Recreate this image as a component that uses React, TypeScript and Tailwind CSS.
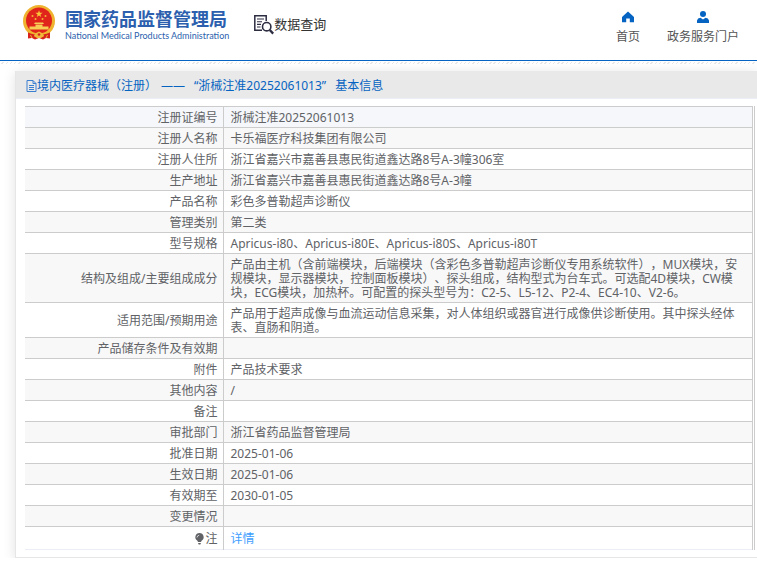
import React from "react";

type Row = {
    label: string;
    value: string;
};

const rows: Row[] = [
    {label: "注册证编号", value: "浙械注准20252061013"},
    {label: "注册人名称", value: "卡乐福医疗科技集团有限公司"},
    {label: "注册人住所", value: "浙江省嘉兴市嘉善县惠民街道鑫达路8号A-3幢306室"},
    {label: "生产地址", value: "浙江省嘉兴市嘉善县惠民街道鑫达路8号A-3幢"},
    {label: "产品名称", value: "彩色多普勒超声诊断仪"},
    {label: "管理类别", value: "第二类"},
    {label: "型号规格", value: "Apricus-i80、Apricus-i80E、Apricus-i80S、Apricus-i80T"},
    {
        label: "结构及组成/主要组成成分",
        value: "产品由主机（含前端模块，后端模块（含彩色多普勒超声诊断仪专用系统软件），MUX模块，安规模块，显示器模块，控制面板模块）、探头组成，结构型式为台车式。可选配4D模块，CW模块，ECG模块，加热杯。可配置的探头型号为：C2-5、L5-12、P2-4、EC4-10、V2-6。",
    },
    {
        label: "适用范围/预期用途",
        value: "产品用于超声成像与血流运动信息采集，对人体组织或器官进行成像供诊断使用。其中探头经体表、直肠和阴道。",
    },
    {label: "产品储存条件及有效期", value: ""},
    {label: "附件", value: "产品技术要求"},
    {label: "其他内容", value: "/"},
    {label: "备注", value: ""},
    {label: "审批部门", value: "浙江省药品监督管理局"},
    {label: "批准日期", value: "2025-01-06"},
    {label: "生效日期", value: "2025-01-06"},
    {label: "有效期至", value: "2030-01-05"},
    {label: "变更情况", value: ""},
];

const Emblem: React.FC = () => (
    <svg className="w-8 h-9" viewBox="0 0 32 36" fill="none" aria-hidden="true">
        <path d="M5 25L5 33.5L9 33L12 34.5L16 33L20 34.5L23 33L27 33.5L27 25Z" fill="#d8231c"/>
        <circle cx="16" cy="16" r="16" fill="#efb32f"/>
        <circle cx="16" cy="15.5" r="13" fill="#e0231b"/>
        <path d="M16 5.2L16.9 7.8H19.6L17.4 9.4L18.2 12L16 10.4L13.8 12L14.6 9.4L12.4 7.8H15.1Z" fill="#f8c63a"/>
        <circle cx="9.5" cy="11" r="1" fill="#f3b436"/>
        <circle cx="22.5" cy="11" r="1" fill="#f3b436"/>
        <circle cx="12.5" cy="14" r="1" fill="#f3b436"/>
        <circle cx="19.5" cy="14" r="1" fill="#f3b436"/>
        <path d="M12 17.5H20L21 19H11ZM12.5 19.5H19.5V21.5H12.5ZM6.5 21.5H25.5V24.5H6.5Z" fill="#f6cd55"/>
        <path d="M5 27.5Q10 30 12 29L11 33L5 32.5ZM27 27.5Q22 30 20 29L21 33L27 32.5Z" fill="#d8231c"/>
        <path d="M12 28.5L16 26.5L20 28.5L21 31L18 33H14L11 31Z" fill="#f0b83a"/>
        <circle cx="16" cy="29.5" r="1.3" fill="#d8231c"/>
        <path d="M7.5 30L9 33M24.5 30L23 33" stroke="#efb32f"/>
    </svg>
);

const SearchDocIcon: React.FC = () => (
    <svg className="w-5 h-5" viewBox="0 0 20 20" fill="none" stroke="#2d2d42" aria-hidden="true">
        <path d="M8 15.3H0.8V0.8H12.2V6" strokeWidth="1.5"/>
        <path d="M3 4H10M3 6.7H8M3 9.4H7M3 12H6.5" strokeWidth="1.1"/>
        <circle cx="12.7" cy="11.7" r="4.2" strokeWidth="1.6"/>
        <path d="M15.8 15L19.2 18.6" strokeWidth="2.4"/>
    </svg>
);

const Header: React.FC = () => {
    return (
        <header>
            <div className="flex justify-between h-15 pl-[23px] pr-[18px]">
                <div className="flex items-start">
                    <a href="#" className="flex items-start gap-[10px] pt-[5px]">
                        <Emblem/>
                        <span className="flex flex-col pt-[3px] whitespace-nowrap text-[#2c5fae]">
                            <span className="text-[18px] leading-[22px] font-bold">国家药品监督管理局</span>
                            <span className="font-['Lato'] text-[9px] leading-[12px]">
                                National Medical Products Administration
                            </span>
                        </span>
                    </a>
                    <a href="#" className="flex items-start ml-[25px] pt-[15px] text-[#333] whitespace-nowrap">
                        <SearchDocIcon/>
                        <span className="text-[13px] leading-[18px]">数据查询</span>
                    </a>
                </div>
                <nav className="flex gap-[27px] pt-[11px] text-[#555] whitespace-nowrap">
                    <a href="#" className="flex flex-col items-center gap-[5px]">
                        <svg className="w-3 h-3" viewBox="0 0 12 12" aria-hidden="true">
                            <path d="M6 0.5L12 6V11.2H7.8V7.5H4.2V11.2H0V6Z" fill="#0563c1"/>
                        </svg>
                        <span className="leading-[18px]">首页</span>
                    </a>
                    <a href="#" className="flex flex-col items-center gap-[5px]">
                        <svg className="w-3 h-3" viewBox="0 0 12 12" fill="#0563c1" aria-hidden="true">
                            <circle cx="6" cy="3" r="3"/>
                            <path d="M0 12V9.5Q0.5 7 3.5 6.8L6 8.5L8.5 6.8Q11.5 7 12 9.5V12Z"/>
                        </svg>
                        <span className="leading-[18px]">政务服务门户</span>
                    </a>
                </nav>
            </div>
            <div className="h-px bg-[#0563c1]"/>
            <div className="mt-px h-[2px] bg-[repeating-linear-gradient(135deg,#fff_0_2px,#e8e8e8_2px_3px)]"/>
        </header>
    );
};

const App: React.FC = () => {
    return (
        <div className="bg-white text-[12px] leading-[14px] text-[#606266] font-['Noto_Sans','Noto_Sans_CJK_SC',sans-serif] [text-spacing-trim:space-all]">
            <Header/>
            <main className="ml-[15px] mt-[7px] border-l border-b border-[#e6e6e6] shadow-[0_2px_12px_rgba(0,0,0,0.12)]">
                <h1 className="flex items-center h-7 pt-[2px] pl-[10px] bg-[#e9e9e9] border-b border-[#ebeef5] text-[#0563c1] whitespace-nowrap">
                    <svg className="w-[11px] h-3 shrink-0" viewBox="0 0 11 12" fill="none" stroke="#3b7fd0" aria-hidden="true">
                        <path d="M1 0.5H7L10 3.5V11.5H1ZM7 0.5V3.5H10M3 5.5H8M3 7.5H8M3 9.5H8"/>
                    </svg>
                    <span>境内医疗器械（注册）</span>
                    <span className="ml-1">——</span>
                    <span className="ml-[9px]">“浙械注准20252061013”</span>
                    <span className="ml-[9px]">基本信息</span>
                </h1>
                <div className="pt-[7px] pb-[7px] pl-[9px] pr-[2px]">
                    <div className="border-r border-[#ccc] pr-px">
                        <table className="w-full table-fixed border-collapse border-t border-[#ccc]">
                            <colgroup>
                                <col className="w-[198px]"/>
                                <col/>
                            </colgroup>
                            <tbody>
                            {rows.map((row) => (
                                <tr
                                    key={row.label}
                                    className="border-b border-[#ccc] first:bg-[#f5f7fa] even:bg-[#f8f8f8]"
                                >
                                    <th scope="row" className="pt-1 pb-[2px] pr-[5px] text-right font-normal border-r border-[#ccc]">
                                        {row.label}
                                    </th>
                                    <td className="h-[21px] pt-1 pb-[2px] px-[7px] border-r border-[#ccc]">{row.value}</td>
                                </tr>
                            ))}
                            <tr className="border-b border-[#ebeef5]">
                                <th scope="row" className="pt-[5px] pb-[3px] pr-[5px] font-normal border-r border-[#ccc]">
                                    <span className="flex items-center justify-end">
                                        <svg className="w-[11px] h-3" viewBox="0 0 11 12" aria-hidden="true">
                                            <path d="M5.5 0A4.2 4.2 0 0 1 7.6 7.8L7 9H4L3.4 7.8A4.2 4.2 0 0 1 5.5 0ZM4 10H7L6.3 11.5H4.7Z" fill="#606266"/>
                                            <path d="M3 4.5Q3.2 2.5 5.2 2.2" fill="none" stroke="#fff" strokeWidth="0.7"/>
                                        </svg>
                                        注
                                    </span>
                                </th>
                                <td className="pt-[5px] pb-[3px] px-[7px] border-r border-[#ccc]">
                                    <a href="#" className="text-[#409eff]">详情</a>
                                </td>
                            </tr>
                            </tbody>
                        </table>
                    </div>
                </div>
            </main>
        </div>
    );
};

export default App;
